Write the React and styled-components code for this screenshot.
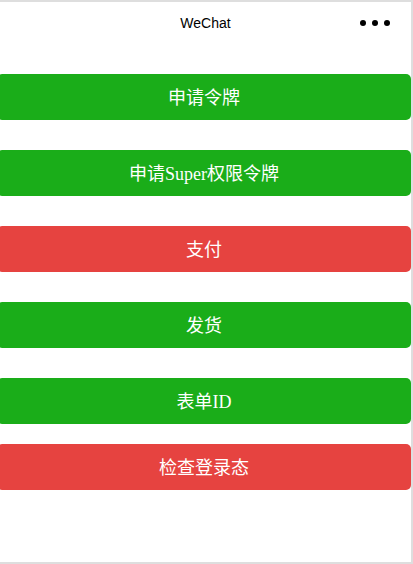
import React from "react";
import styled, { createGlobalStyle } from "styled-components";

const GlobalStyle = createGlobalStyle`
    html, body {
        margin: 0;
        padding: 0;
        background: #dedede;
    }
`;

const Frame = styled.div`
    width: 411px;
    height: 560px;
    margin-top: 2px;
    background: #ffffff;
    overflow: hidden;
    display: flex;
    flex-direction: column;
`;

const NavBar = styled.div`
    height: 42px;
    display: flex;
    align-items: center;
    justify-content: center;
    position: relative;
`;

const Title = styled.span`
    font-family: "Liberation Sans", Arial, sans-serif;
    font-size: 14px;
    color: #000000;
`;

const Dots = styled.div`
    position: absolute;
    right: 21px;
    top: 18px;
    display: flex;
    gap: 6px;
`;

const Dot = styled.span`
    width: 6px;
    height: 6px;
    border-radius: 50%;
    background: #000000;
`;

const List = styled.div`
    display: flex;
    flex-direction: column;
    padding-top: 30px;
`;

const Button = styled.button`
    display: block;
    height: 46px;
    margin: 0 0 ${(p) => p.$gap}px -3px;
    padding: 0 0 3px;
    border: none;
    border-radius: 5px;
    background: ${(p) => (p.$warn ? "#e64340" : "#1aad19")};
    color: #ffffff;
    font-family: "Liberation Serif", "Noto Sans CJK SC", serif;
    font-size: 18px;
    cursor: pointer;
`;

const buttons = [
    { label: "申请令牌", gap: 30 },
    { label: "申请Super权限令牌", gap: 30 },
    { label: "支付", gap: 30, warn: true },
    { label: "发货", gap: 30 },
    { label: "表单ID", gap: 20 },
    { label: "检查登录态", gap: 0, warn: true },
];

export default function App() {
    return (
        <>
            <GlobalStyle />
            <Frame>
                <NavBar>
                    <Title>WeChat</Title>
                    <Dots>
                        <Dot />
                        <Dot />
                        <Dot />
                    </Dots>
                </NavBar>
                <List>
                    {buttons.map((b) => (
                        <Button key={b.label} $warn={b.warn} $gap={b.gap}>
                            {b.label}
                        </Button>
                    ))}
                </List>
            </Frame>
        </>
    );
}
